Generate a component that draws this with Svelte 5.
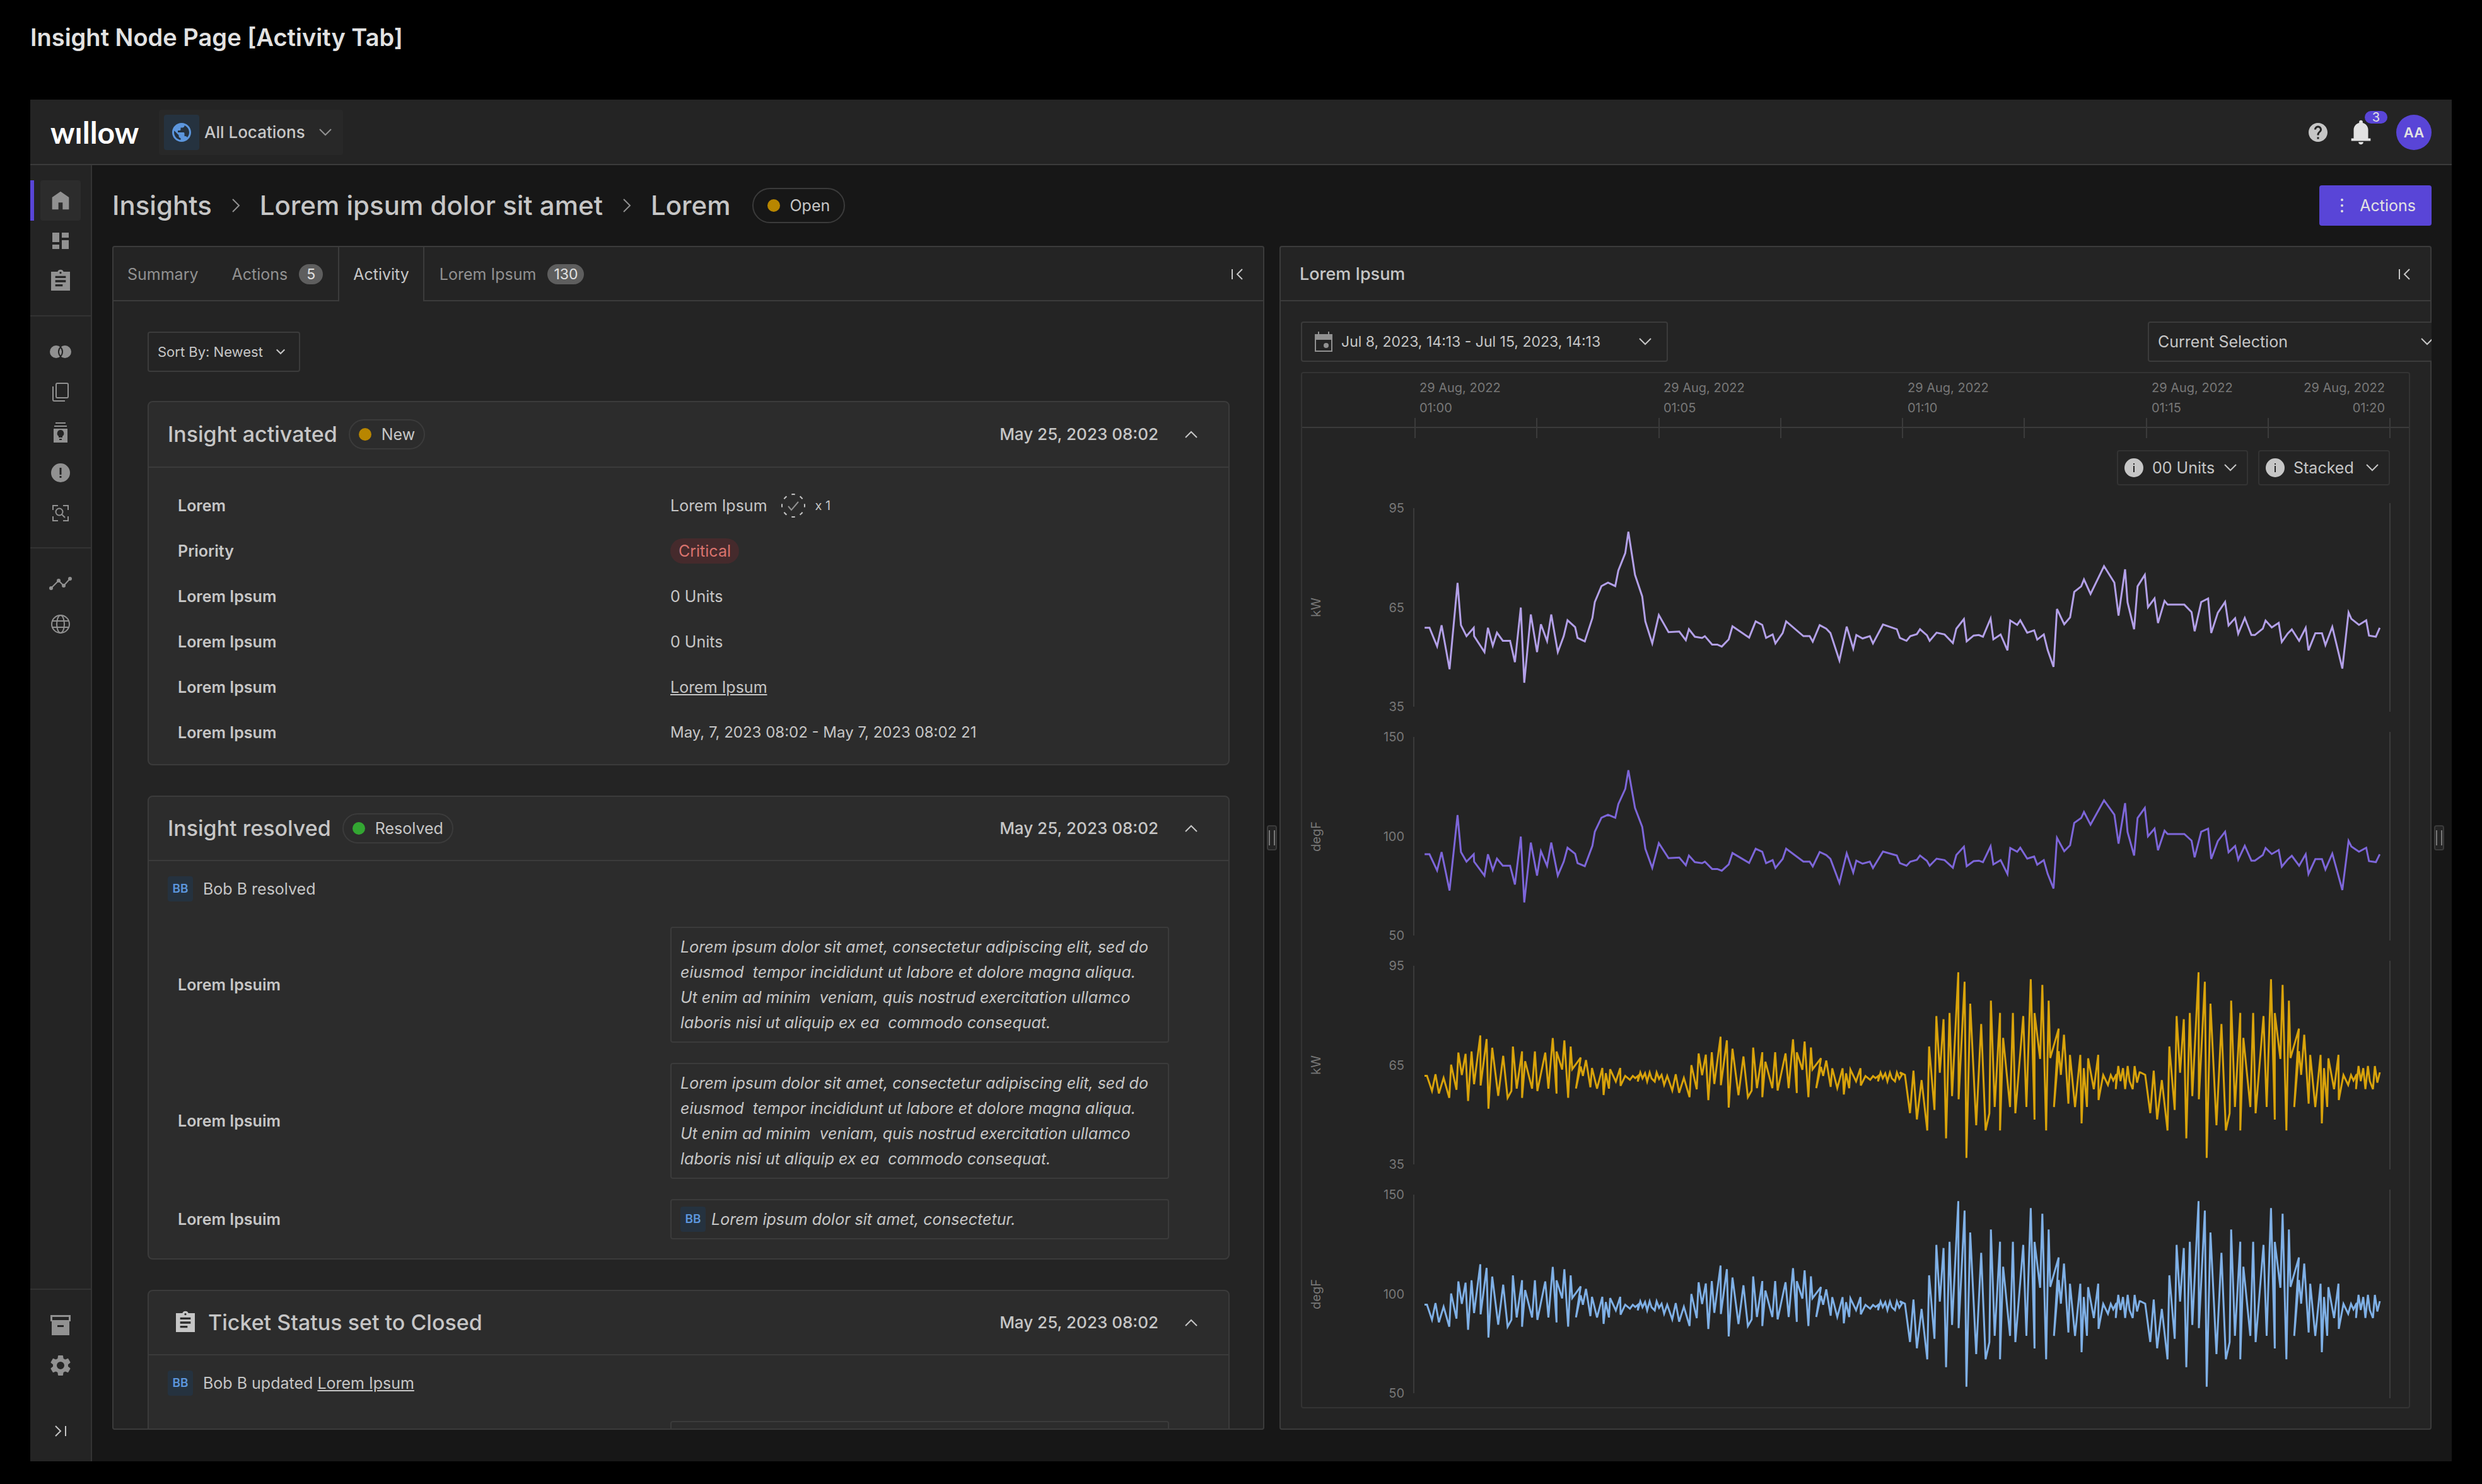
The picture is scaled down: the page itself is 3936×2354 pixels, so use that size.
<script>
  const ticks = Array.from({ length: 9 }, (_, i) => i);

  const times = [
    { day: '29 Aug, 2022', time: '01:00' },
    { day: '29 Aug, 2022', time: '01:05' },
    { day: '29 Aug, 2022', time: '01:10' },
    { day: '29 Aug, 2022', time: '01:15' }
  ];

  const load = [
    108,470,122,470,144,534,157,461,180,613,203,315,213,461,229,499,250,470,251,499,281,554,291,470,
    305,532,317,487,334,515,355,515,369,589,386,400,396,660,415,424,433,554,444,458,462,516,474,424,
    493,554,510,499,521,444,543,468,550,505,571,517,593,436,600,381,619,326,638,314,659,326,668,272,
    688,212,697,138,716,287,737,362,746,448,766,524,785,426,813,485,844,483,863,513,872,475,889,501,
    910,505,918,499,939,528,954,528,967,535,987,510,998,465,1046,504,1065,448,1084,460,1095,505,
    1114,493,1122,524,1143,488,1153,448,1203,499,1221,499,1230,518,1250,461,1269,473,1281,488,
    1307,583,1328,466,1347,542,1356,495,1374,507,1395,499,1404,524,1433,459,1473,475,1482,505,
    1501,515,1512,499,1531,492,1540,475,1560,496,1568,515,1588,487,1611,493,1635,523,1645,473,
    1667,440,1675,517,1695,497,1710,495,1722,501,1744,438,1752,510,1773,493,1793,548,1801,445,
    1821,460,1830,444,1850,487,1870,479,1879,511,1898,493,1909,547,1926,605,1936,405,1957,458,
    1974,434,1986,346,2006,327,2014,303,2033,353,2072,257,2102,314,2114,428,2133,268,2140,382,
    2159,475,2169,327,2190,287,2199,399,2218,369,2228,454,2247,377,2256,390,2304,390,2325,416,
    2334,482,2353,381,2373,369,2382,488,2401,418,2422,381,2432,462,2451,437,2460,491,2479,436,
    2498,495,2508,495,2531,473,2539,445,2557,469,2577,453,2586,519,2603,490,2615,476,2636,515,
    2655,470,2663,548,2683,489,2702,489,2712,530,2732,467,2761,611,2779,417,2787,439,2809,460,
    2830,444,2838,497,2858,501,2869,470
  ];

  const burst = [
    22,555,38,737,49,535,60,767,75,580,93,820,99,420,116,722,122,275,133,545,145,290,153,857,
    164,260,172,656,192,67,193,671,212,112,218,950,230,216,249,795,265,313,279,820,291,738,296,202,
    308,708,325,260,325,820,335,379,357,708,366,260,374,738,399,275,409,708,423,100,435,768,435,261,
    453,479,460,127,472,820,480,202,485,475,512,335,497,708,512,442,519,555,529,364,543,692,548,460,
    564,708,581,460,585,786,592,523,602,708,606,476,624,623,638,460,639,675,654,556,669,603,678,556,
    686,582,696,552,694,623,702,513,709,585,717,523,724,623,732,513,738,585,748,623,754,513,762,592,
    770,543
  ];

  function toPoints(samples, fx, fy) {
    const out = [];
    for (let i = 0; i < samples.length; i += 2) {
      out.push(fx(samples[i]).toFixed(1) + ',' + fy(samples[i + 1]).toFixed(1));
    }
    return out.join(' ');
  }

  const loadX = (x) => x / 1.823 - 41;
  const loadY = (y) => y / 2.178 - 18;
  const kwLoad = toPoints(load, loadX, loadY);
  const degLoad = toPoints(load, loadX, (y) => 60.7 + 0.8755 * (loadY(y) - 45.4));

  const cycle = [
    { start: 11, gain: 0.395, lead: [14, 555] },
    { start: 392, gain: 0.382, lead: [12, 668] },
    { start: 769, gain: 1, lead: [6, 543] },
    { start: 1150, gain: 1, lead: [6, 543] }
  ]
    .map((c) =>
      toPoints(
        [...c.lead, ...burst],
        (x) => c.start + x / 2.0103,
        (y) => (563 + c.gain * (y - 563)) / 3 - 4
      )
    )
    .join(' ');

  const plots = [
    { unit: 'kW', marks: ['95', '65', '35'], tone: 'lilac', points: kwLoad },
    { unit: 'degF', marks: ['150', '100', '50'], tone: 'violet', points: degLoad },
    { unit: 'kW', marks: ['95', '65', '35'], tone: 'amber', points: cycle },
    { unit: 'degF', marks: ['150', '100', '50'], tone: 'sky', points: cycle }
  ];

  const longNote =
    'Lorem ipsum dolor sit amet, consectetur adipiscing elit, sed do\neiusmod  tempor incididunt ut labore et dolore magna aliqua.\nUt enim ad minim  veniam, quis nostrud exercitation ullamco\nlaboris nisi ut aliquip ex ea  commodo consequat.';
</script>

{#snippet chevronDown()}
  <svg class="chev" viewBox="0 0 20 12" aria-hidden="true"><path d="M1 1l9 9 9-9" /></svg>
{/snippet}

{#snippet chevronUp()}
  <svg class="chev" viewBox="0 0 20 12" aria-hidden="true"><path d="M1 11l9-9 9 9" /></svg>
{/snippet}

{#snippet crumbArrow()}
  <svg class="crumb-arrow" viewBox="0 0 14 24" aria-hidden="true"><path d="M2 2l10 10L2 22" /></svg>
{/snippet}

{#snippet collapse()}
  <svg class="collapse" viewBox="0 0 20 18" aria-hidden="true"><path d="M2 1v16M18 1l-8 8 8 8" /></svg>
{/snippet}

{#snippet info()}
  <svg class="info" viewBox="0 0 30 30" aria-hidden="true">
    <circle cx="15" cy="15" r="15" />
    <path d="M14 8h2v2h-2zM14 12h2v10h-2z" />
  </svg>
{/snippet}

{#snippet clipboard()}
  <svg class="glyph" viewBox="0 0 24 24" aria-hidden="true">
    <path d="M21 3h-6.2a3 3 0 0 0-5.6 0H3v18h18V3zM12 3a1 1 0 1 1 0 2 1 1 0 0 1 0-2zm2 14H7v-2h7v2zm3-4H7v-2h10v2zm0-4H7V7h10v2z" />
  </svg>
{/snippet}

{#snippet cardHead(title, status, tone)}
  <header class="card-head">
    <h2>{title}</h2>
    <span class="pill small"><i class="dot {tone}"></i>{status}</span>
    <time>May 25, 2023 08:02</time>
    <button class="bare" aria-label="Collapse {title}">{@render chevronUp()}</button>
  </header>
{/snippet}

<div class="page">
  <h1>Insight Node Page [Activity Tab]</h1>

  <div class="app">
    <header class="topbar">
      <span class="logo" aria-label="willow">wıllow</span>
      <button class="site">
        <span class="site-icon">
          <svg viewBox="0 0 24 24" aria-hidden="true">
            <path d="M12 2C6.48 2 2 6.48 2 12s4.48 10 10 10 10-4.48 10-10S17.52 2 12 2zm-1 17.93c-3.95-.49-7-3.85-7-7.93 0-.62.08-1.21.21-1.79L9 15v1c0 1.1.9 2 2 2v1.93zm6.9-2.54c-.26-.81-1-1.39-1.9-1.39h-1v-3c0-.55-.45-1-1-1H8v-2h2c.55 0 1-.45 1-1V7h2c1.1 0 2-.9 2-2v-.41c2.93 1.19 5 4.06 5 7.41 0 2.08-.8 3.97-2.1 5.39z" />
          </svg>
        </span>
        <span class="site-name">All Locations</span>
        {@render chevronDown()}
      </button>
      <div class="user">
        <button class="bare help" aria-label="Help">
          <svg viewBox="0 0 24 24" aria-hidden="true">
            <path d="M12 2C6.48 2 2 6.48 2 12s4.48 10 10 10 10-4.48 10-10S17.52 2 12 2zm1 17h-2v-2h2v2zm2.07-7.75l-.9.92C13.45 12.9 13 13.5 13 15h-2v-.5c0-1.1.45-2.1 1.17-2.83l1.24-1.26c.37-.36.59-.86.59-1.41 0-1.1-.9-2-2-2s-2 .9-2 2H8c0-2.21 1.79-4 4-4s4 1.79 4 4c0 .88-.36 1.68-.93 2.25z" />
          </svg>
        </button>
        <button class="bare bell" aria-label="Notifications">
          <svg viewBox="0 0 24 24" aria-hidden="true">
            <path d="M4 17h2v-7c0-2.9 1.9-5.2 4.5-5.8v-.7a1.5 1.5 0 0 1 3 0v.7c2.6.6 4.5 2.9 4.5 5.8v7h2v2H4zM12 22a2 2 0 0 0 2-2h-4a2 2 0 0 0 2 2z" />
          </svg>
          <span class="count">3</span>
        </button>
        <button class="avatar">AA</button>
      </div>
    </header>

    <div class="shell">
      <nav class="rail" aria-label="Main">
        <div class="group">
          <a href="#home" class="item active" aria-label="Home">
            <svg class="glyph" viewBox="0 0 24 24"><path d="M4 20.5V9l8-5.5L20 9v11.5h-6V14h-4v6.500z" /></svg>
          </a>
          <a href="#dashboards" class="item" aria-label="Dashboards">
            <svg class="glyph" viewBox="-7 -7 40 40"><path d="M0 0h11v15H0zM0 19h11v7H0zM15 0h11v8H15zM15 12h11v14H15z" /></svg>
          </a>
          <a href="#tickets" class="item" aria-label="Tickets">{@render clipboard()}</a>
        </div>
        <div class="group">
          <a href="#twins" class="item" aria-label="Twins">
            <svg class="glyph" viewBox="-20 -20 40 40">
              <circle cx="-7" r="10" /><circle cx="7" r="10" />
              <path class="lens" d="M0 -7.200a10 10 0 0 1 0 14.400a10 10 0 0 1 0 -14.400z" />
            </svg>
          </a>
          <a href="#library" class="item" aria-label="Library">
            <svg class="glyph line" viewBox="-20 -20 40 40"><rect x="-7" y="-14" width="19" height="23" rx="2" /><path d="M-12-9v21q0 2 2 2H7" /></svg>
          </a>
          <a href="#insights" class="item" aria-label="Insights">
            <svg class="glyph" viewBox="-20 -20 40 40">
              <path d="M-8-16H8v2H-8zM-10-11h20v2h-20zM-11-6h22v22h-22z" />
              <path class="cut" d="M0-4a5.500 5.500 0 0 0-3 10v2h6v-2a5.500 5.500 0 0 0-3-10zM-2 10h4v2h-4z" />
            </svg>
          </a>
          <a href="#alerts" class="item" aria-label="Alerts">
            <svg class="glyph" viewBox="-20 -20 40 40"><circle r="15" /><path class="cut" d="M-1.500-8h3V3h-3zM-1.500 5h3v3h-3z" /></svg>
          </a>
          <a href="#inspect" class="item" aria-label="Inspections">
            <svg class="glyph line" viewBox="-20 -20 40 40">
              <path d="M-12-5v-7h8M4-12h8v7M12 5v7H4M-4 12h-8V5" /><circle cx="-2" cy="-2" r="5.500" /><path d="M2 2l5 5" />
            </svg>
          </a>
        </div>
        <div class="group">
          <a href="#trends" class="item" aria-label="Time series">
            <svg class="glyph line" viewBox="-20 -20 40 40">
              <path d="M-15 7L-3-5 5 3 15-8" />
              <g class="solid"><circle cx="-15" cy="7" r="3" /><circle cx="-3" cy="-5" r="3" /><circle cx="5" cy="3" r="3" /><circle cx="15" cy="-8" r="3" /></g>
            </svg>
          </a>
          <a href="#map" class="item" aria-label="Map">
            <svg class="glyph line" viewBox="-20 -20 40 40"><circle r="14" /><ellipse rx="6" ry="14" /><path d="M-13-5h26M-13 5h26" /></svg>
          </a>
        </div>
        <div class="group foot">
          <a href="#archive" class="item" aria-label="Archive">
            <svg class="glyph" viewBox="-20 -20 40 40">
              <path d="M-16-16h32v10h-32zM-14-6h28v22h-28z" /><path class="cut" d="M-13-13h26v5h-26zM-5 0H5v3H-5z" />
            </svg>
          </a>
          <a href="#settings" class="item" aria-label="Settings">
            <svg class="glyph" viewBox="0 0 24 24">
              <path d="M19.14 12.940c.04-.3.06-.61.06-.94 0-.32-.02-.64-.07-.94l2.030-1.580c.18-.14.23-.41.12-.61l-1.920-3.320c-.12-.22-.37-.29-.59-.22l-2.390.96c-.5-.38-1.030-.7-1.620-.94l-.36-2.540c-.04-.24-.24-.41-.48-.41h-3.840c-.24 0-.43.17-.47.41l-.36 2.540c-.59.24-1.130.57-1.620.94l-2.390-.96c-.22-.08-.47 0-.59.22L2.740 8.870c-.12.21-.08.47.12.61l2.030 1.580c-.05.3-.09.63-.09.94s.02.64.07.94l-2.030 1.580c-.18.14-.23.41-.12.61l1.920 3.320c.12.22.37.29.59.22l2.390-.96c.5.38 1.030.7 1.620.94l.36 2.540c.05.24.24.41.48.41h3.840c.24 0 .44-.17.47-.41l.36-2.540c.59-.24 1.130-.56 1.620-.94l2.390.96c.22.08.47 0 .59-.22l1.920-3.320c.12-.22.07-.47-.12-.61l-2.010-1.580zM12 15.600a3.600 3.600 0 1 1 0-7.200 3.600 3.600 0 0 1 0 7.200z" />
            </svg>
          </a>
        </div>
        <button class="item expand" aria-label="Expand navigation">
          <svg class="collapse" viewBox="0 0 20 18"><path d="M18 1v16M2 1l8 8-8 8" /></svg>
        </button>
      </nav>

      <main>
        <div class="heading">
          <nav class="crumbs" aria-label="Breadcrumb">
            <a href="#insights">Insights</a>
            {@render crumbArrow()}
            <a href="#insight">Lorem ipsum dolor sit amet</a>
            {@render crumbArrow()}
            <a href="#node">Lorem</a>
          </nav>
          <span class="pill"><i class="dot amber-dot"></i>Open</span>
          <button class="primary">
            <svg viewBox="0 0 4 24" aria-hidden="true"><circle cx="2" cy="3" r="2" /><circle cx="2" cy="12" r="2" /><circle cx="2" cy="21" r="2" /></svg>
            Actions
          </button>
        </div>

        <div class="panels">
          <section class="panel">
            <div class="panel-head">
              <div class="tabs" role="tablist">
                <button role="tab" aria-selected="false">Summary</button>
                <button role="tab" aria-selected="false">Actions <span class="badge">5</span></button>
                <button role="tab" aria-selected="true">Activity</button>
                <button role="tab" aria-selected="false">Lorem Ipsum <span class="badge">130</span></button>
              </div>
              <button class="bare" aria-label="Collapse panel">{@render collapse()}</button>
            </div>

            <div class="feed">
              <label class="select sort">
                <select aria-label="Sort order"><option>Sort By: Newest</option></select>
                {@render chevronDown()}
              </label>

              <article class="card">
                {@render cardHead('Insight activated', 'New', 'amber-dot')}
                <dl class="facts">
                  <div><dt>Lorem</dt><dd>Lorem Ipsum
                    <svg class="check" viewBox="-19 -19 38 38" aria-hidden="true"><circle r="18" pathLength="80" /><path d="M-8 1l5 6L8-6" /></svg>
                    <small>x 1</small></dd></div>
                  <div><dt>Priority</dt><dd><span class="critical">Critical</span></dd></div>
                  <div><dt>Lorem Ipsum</dt><dd>0 Units</dd></div>
                  <div><dt>Lorem Ipsum</dt><dd>0 Units</dd></div>
                  <div><dt>Lorem Ipsum</dt><dd><a href="#source">Lorem Ipsum</a></dd></div>
                  <div><dt>Lorem Ipsum</dt><dd class="period">May, 7, 2023 08:02 - May 7, 2023 08:02 21</dd></div>
                </dl>
              </article>

              <article class="card">
                {@render cardHead('Insight resolved', 'Resolved', 'green-dot')}
                <p class="actor"><span class="initials">BB</span>Bob B resolved</p>
                <dl class="notes">
                  <div><dt>Lorem Ipsuim</dt><dd>{longNote}</dd></div>
                  <div><dt>Lorem Ipsuim</dt><dd>{longNote}</dd></div>
                  <div><dt>Lorem Ipsuim</dt><dd class="assignee"><span class="initials">BB</span>Lorem ipsum dolor sit amet, consectetur.</dd></div>
                </dl>
              </article>

              <article class="card">
                <header class="card-head ticket">
                  {@render clipboard()}
                  <h2>Ticket Status set to Closed</h2>
                  <time>May 25, 2023 08:02</time>
                  <button class="bare" aria-label="Collapse ticket">{@render chevronUp()}</button>
                </header>
                <p class="actor"><span class="initials">BB</span><span>Bob B updated <a href="#ticket">Lorem Ipsum</a></span></p>
                <dl class="notes">
                  <div><dt></dt><dd></dd></div>
                </dl>
              </article>
            </div>
          </section>

          <div class="gutter"><i class="grip"></i></div>

          <section class="panel">
            <div class="panel-head">
              <h2 class="panel-title">Lorem Ipsum</h2>
              <button class="bare" aria-label="Collapse panel">{@render collapse()}</button>
            </div>

            <div class="viewer">
              <div class="toolbar">
                <button class="range">
                  <svg class="calendar" viewBox="0 0 28 32" aria-hidden="true">
                    <path fill-rule="evenodd" d="M0 4h5V0h2v4h14V0h2v4h5v28H0zM2 13v17h24V13z" /><circle cx="18" cy="22" r="4" />
                  </svg>
                  <span>Jul 8, 2023, 14:13 - Jul 15, 2023, 14:13</span>
                  {@render chevronDown()}
                </button>
                <label class="select selection">
                  <select aria-label="Series"><option>Current Selection</option></select>
                  {@render chevronDown()}
                </label>
              </div>

              <div class="chart">
                <div class="axis">
                  <div class="times">
                    {#each times as t}
                      <p>{t.day}<br />{t.time}</p>
                    {/each}
                    <p>29 Aug, 2022<br />01:20</p>
                  </div>
                  <div class="ticks">{#each ticks as t (t)}<i></i>{/each}</div>
                </div>

                <div class="options">
                  <label class="select">
                    {@render info()}
                    <select aria-label="Units"><option>00 Units</option></select>
                    {@render chevronDown()}
                  </label>
                  <label class="select">
                    {@render info()}
                    <select aria-label="Layout"><option>Stacked</option></select>
                    {@render chevronDown()}
                  </label>
                </div>

                <div class="plots">
                  {#each plots as plot}
                    <figure>
                      <figcaption>{plot.unit}</figcaption>
                      <div class="marks">{#each plot.marks as m}<span>{m}</span>{/each}</div>
                      <svg class="plot {plot.tone}" viewBox="0 0 1550 331" preserveAspectRatio="none" aria-hidden="true">
                        <path class="edge" d="M1 8V323M1549 0V331" />
                        <polyline points={plot.points} />
                      </svg>
                    </figure>
                  {/each}
                </div>
              </div>
            </div>
          </section>

          <div class="gutter"><i class="grip"></i></div>
        </div>
      </main>
    </div>
  </div>
</div>

<style>
  :global(*) {
    box-sizing: border-box;
  }
  :global(body) {
    margin: 0;
    background: #000;
  }
  h1, h2, p, dl, dd, figure {
    margin: 0;
  }
  button, select {
    font: inherit;
    color: inherit;
    background: none;
    border: 0;
    padding: 0;
    margin: 0;
  }
  select {
    appearance: none;
    flex: 1;
    min-width: 0;
  }
  a {
    color: inherit;
  }
  svg {
    display: block;
    flex: none;
    fill: currentColor;
  }

  .page {
    display: flex;
    flex-direction: column;
    height: 100vh;
    padding: 0 48px 36px;
    background: #000;
    color: #c6c6c6;
    font-family: Inter, sans-serif;
    font-size: 25px;
    line-height: 40px;
  }
  h1 {
    flex: none;
    height: 158px;
    padding-top: 34px;
    color: #e2e2e2;
    font-size: 38px;
    font-weight: 600;
    line-height: 50px;
  }
  .app {
    flex: 1;
    min-height: 0;
    display: flex;
    flex-direction: column;
    background: #171717;
  }

  .topbar {
    flex: none;
    display: flex;
    align-items: center;
    height: 104px;
    padding: 0 32px;
    background: #242424;
    box-shadow: inset 0 -2px #3b3b3b;
  }
  .logo {
    width: 172px;
    color: #fff;
    font-family: Lato, sans-serif;
    font-size: 48px;
    font-weight: 700;
  }
  .site {
    display: flex;
    align-items: center;
    height: 72px;
    padding: 0 18px 0 8px;
    border-radius: 4px;
    background: #282828;
    font-size: 26px;
    font-weight: 500;
  }
  .site-icon {
    display: grid;
    place-items: center;
    width: 56px;
    height: 56px;
    margin-right: 8px;
    border-radius: 4px;
    background: #25323f;
    color: #5c96dd;
  }
  .site-icon svg, .help svg {
    width: 36px;
    height: 36px;
  }
  .site-name {
    margin-right: 22px;
  }
  .site .chev {
    color: #919191;
  }
  .user {
    display: flex;
    align-items: center;
    margin-left: auto;
  }
  .bell {
    position: relative;
    margin: 0 33px 0 27px;
    color: #e2e2e2;
  }
  .bell svg {
    width: 46px;
    height: 46px;
  }
  .count {
    position: absolute;
    left: 29px;
    top: -11px;
    width: 36px;
    height: 20px;
    border-radius: 10px;
    background: #5945d7;
    font-size: 20px;
    line-height: 20px;
  }
  .avatar {
    width: 56px;
    height: 56px;
    border-radius: 50%;
    background: #5945d7;
    color: #e2e2e2;
    font-size: 22px;
    font-weight: 600;
  }

  .chev {
    width: 20px;
    height: 12px;
    fill: none;
    stroke: currentColor;
    stroke-width: 2;
  }
  .collapse {
    width: 20px;
    height: 18px;
    fill: none;
    stroke: currentColor;
    stroke-width: 2;
  }

  .shell {
    flex: 1;
    min-height: 0;
    display: flex;
  }
  .rail {
    flex: none;
    display: flex;
    flex-direction: column;
    width: 98px;
    padding-bottom: 16px;
    background: #242424;
    border-right: 2px solid #333;
    color: #919191;
  }
  .group {
    padding: 24px 0 22px;
    border-bottom: 2px solid #333;
  }
  .group:nth-of-type(3) {
    border-bottom: 0;
  }
  .foot {
    margin-top: auto;
    padding-bottom: 40px;
    border-top: 2px solid #333;
    border-bottom: 0;
  }
  .item {
    display: grid;
    place-items: center;
    width: 64px;
    height: 64px;
    margin: 0 16px;
    color: inherit;
  }
  .active {
    border-radius: 4px;
    background: #2c2c2c;
    position: relative;
  }
  .active::before {
    content: '';
    position: absolute;
    left: -16px;
    width: 6px;
    height: 64px;
    background: #5945d7;
  }
  .expand {
    color: #c6c6c6;
  }
  .glyph {
    width: 40px;
    height: 40px;
  }
  .line {
    fill: none;
    stroke: currentColor;
    stroke-width: 2;
  }
  .solid {
    fill: currentColor;
    stroke: none;
  }
  .cut {
    fill: #242424;
  }
  .lens {
    stroke: #242424;
    stroke-width: 2;
  }

  main {
    flex: 1;
    min-width: 0;
    display: flex;
    flex-direction: column;
    padding: 32px 8px 50px 32px;
  }
  .heading {
    flex: none;
    display: flex;
    align-items: center;
    height: 64px;
    margin: 0 24px 32px 0;
  }
  .crumbs {
    display: flex;
    align-items: center;
    gap: 31px;
    margin-right: 34px;
    font-size: 42px;
    font-weight: 500;
  }
  .crumbs a {
    text-decoration: none;
  }
  .crumb-arrow {
    width: 14px;
    height: 24px;
    fill: none;
    stroke: #919191;
    stroke-width: 2;
  }
  .pill {
    display: flex;
    align-items: center;
    gap: 16px;
    height: 56px;
    padding: 0 22px;
    border: 2px solid #3b3b3b;
    border-radius: 28px;
  }
  .small {
    height: 48px;
    padding: 0 14px;
    border-radius: 24px;
  }
  .dot {
    width: 20px;
    height: 20px;
    border-radius: 50%;
  }
  .amber-dot {
    background: #b88600;
  }
  .green-dot {
    background: #33a632;
  }
  .primary {
    display: flex;
    align-items: center;
    gap: 26px;
    height: 64px;
    margin-left: auto;
    padding: 0 25px 0 34px;
    border-radius: 4px;
    background: #5945d7;
    color: #e2e2e2;
  }
  .primary svg {
    width: 4px;
    height: 24px;
  }

  .panels {
    flex: 1;
    min-height: 0;
    display: grid;
    grid-template-columns: 1fr 24px 1fr 24px;
    grid-template-rows: minmax(0, 1fr);
  }
  .panel {
    display: flex;
    flex-direction: column;
    min-width: 0;
    padding: 2px;
    overflow: hidden;
    border-radius: 4px;
    background: #242424;
    box-shadow: inset 0 0 0 2px #3b3b3b;
  }
  .panel-head {
    flex: none;
    display: flex;
    align-items: center;
    justify-content: space-between;
    height: 86px;
    padding-right: 31px;
    box-shadow: inset 0 -2px #3b3b3b;
  }
  .panel-title {
    padding-left: 30px;
    font-size: 27px;
    font-weight: 500;
  }
  .tabs {
    display: flex;
    height: 86px;
  }
  .tabs button {
    display: flex;
    align-items: center;
    gap: 18px;
    padding: 0 24px;
    color: #919191;
  }
  .tabs button:first-child {
    padding: 0 29px 0 22px;
  }
  .tabs [aria-selected='true'] {
    padding: 0 22px;
    border: solid #3b3b3b;
    border-width: 0 2px;
    background: #242424;
    color: #c6c6c6;
  }
  .badge {
    min-width: 38px;
    height: 32px;
    padding: 0 10px;
    border-radius: 16px;
    background: #5e5e5e;
    color: #e2e2e2;
    font-size: 23px;
    line-height: 32px;
  }

  .gutter {
    display: grid;
    place-items: center;
  }
  .grip {
    display: flex;
    justify-content: center;
    width: 16px;
    height: 40px;
    padding: 6px 0;
    border: 2px solid #3b3b3b;
    border-radius: 4px;
    background: #242424;
  }
  .grip::before {
    content: '';
    width: 6px;
    border: solid #777;
    border-width: 0 2px;
  }

  .select, .range {
    display: flex;
    align-items: center;
    border: 2px solid #3b3b3b;
    border-radius: 4px;
    height: 64px;
  }
  .feed {
    flex: 1;
    min-height: 0;
    padding: 48px 53px 0 54px;
    overflow: hidden;
  }
  .sort {
    width: 242px;
    margin-bottom: 46px;
    padding: 0 22px 0 14px;
    font-size: 22px;
  }
  .sort .chev {
    width: 14px;
    height: 10px;
    stroke-width: 3;
  }
  .card {
    margin-bottom: 48px;
    border: 2px solid #3b3b3b;
    border-radius: 8px;
    background: #2c2c2c;
  }
  .card-head {
    display: flex;
    align-items: center;
    height: 102px;
    padding: 0 49px 0 30px;
    border-bottom: 2px solid #3b3b3b;
  }
  .card:first-of-type .card-head {
    height: 104px;
  }
  .card-head h2 {
    margin-right: 18px;
    font-size: 34px;
    font-weight: 500;
  }
  .card-head time {
    margin: 0 42px 0 auto;
    font-size: 26px;
    font-weight: 500;
  }
  .ticket {
    padding-left: 38px;
  }
  .card-head.ticket h2 {
    margin-left: 16px;
  }
  .facts {
    padding: 24px 0 14px;
  }
  .facts > div, .notes > div {
    display: grid;
    grid-template-columns: 781px 1fr;
    align-items: center;
    padding-left: 46px;
  }
  .facts > div {
    height: 72px;
  }
  dt {
    font-weight: 600;
  }
  .facts dd {
    display: flex;
    align-items: center;
  }
  .facts .period {
    font-size: 24px;
  }
  .check {
    width: 38px;
    height: 38px;
    margin: 0 16px 0 22px;
    fill: none;
    stroke: currentColor;
    stroke-width: 2;
  }
  .check circle {
    stroke-dasharray: 4 6;
    stroke-dashoffset: 2;
  }
  .check path {
    stroke: #919191;
  }
  small {
    font-size: 20px;
  }
  .critical {
    height: 40px;
    padding: 0 13px;
    border-radius: 20px;
    background: #452a2c;
    color: #d9736e;
  }
  .actor {
    display: flex;
    align-items: center;
    gap: 16px;
    padding: 24px 0 40px 30px;
  }
  .initials {
    width: 40px;
    height: 40px;
    border-radius: 4px;
    background: #25323f;
    color: #5c96dd;
    font-size: 19px;
    font-style: normal;
    font-weight: 600;
    text-align: center;
  }
  .notes {
    display: grid;
    gap: 32px;
    padding-bottom: 30px;
  }
  .notes > div {
    padding-right: 94px;
  }
  .notes dd {
    padding: 10px 0 10px 14px;
    border: 2px solid #3b3b3b;
    border-radius: 4px;
    font-style: italic;
    white-space: pre;
  }
  .notes .assignee {
    display: flex;
    gap: 9px;
  }

  .viewer {
    flex: 1;
    min-height: 0;
    display: flex;
    flex-direction: column;
    gap: 16px;
    padding: 32px;
  }
  .toolbar {
    flex: none;
    display: flex;
    justify-content: space-between;
  }
  .range {
    width: 582px;
    padding: 0 24px 0 20px;
    font-size: 23px;
  }
  .range span {
    margin: 0 auto 0 14px;
  }
  .calendar {
    width: 28px;
    height: 32px;
    color: #919191;
  }
  .selection {
    width: 482px;
    margin-right: -66px;
    padding: 0 27px 0 14px;
    background: #242424;
  }
  .chart {
    flex: 1;
    min-height: 0;
    display: flex;
    flex-direction: column;
    border: 2px solid #333;
    border-radius: 4px;
  }
  .axis {
    flex: none;
    height: 87px;
    padding: 7px 29px 0 178px;
    border-bottom: 2px solid #3b3b3b;
    color: #777;
    font-size: 20px;
    line-height: 32px;
  }
  .times {
    display: grid;
    grid-template-columns: repeat(4, minmax(0, 1fr));
  }
  .times p {
    grid-row: 1;
    padding-left: 8px;
  }
  .times p:nth-child(1) {
    grid-column: 1;
  }
  .times p:nth-child(2) {
    grid-column: 2;
  }
  .times p:nth-child(3) {
    grid-column: 3;
  }
  .times p:nth-child(4) {
    grid-column: 4;
  }
  .times p:last-child {
    grid-column: 4;
    justify-self: end;
    padding-right: 9px;
    text-align: right;
  }
  .ticks {
    display: flex;
    justify-content: space-between;
    height: 32px;
  }
  .ticks i {
    width: 2px;
    background: #3b3b3b;
  }
  .options {
    flex: none;
    display: flex;
    justify-content: flex-end;
    gap: 16px;
    padding: 35px 30px 28px;
  }
  .options .select {
    height: 56px;
    gap: 14px;
    padding: 0 16px 0 10px;
    border-color: #333;
  }
  .options .select:last-child select {
    margin-right: 5px;
  }
  .info {
    width: 30px;
    height: 30px;
  }
  .info path {
    fill: #242424;
  }
  .plots {
    flex: 1;
    min-height: 0;
    display: flex;
    flex-direction: column;
    gap: 32px;
    padding: 0 29px 14px 0;
  }
  figure {
    flex: 1;
    min-height: 0;
    display: grid;
    grid-template-columns: 44px 118px 1fr;
    color: #777;
    font-size: 20px;
    line-height: 16px;
  }
  figcaption {
    place-self: center;
    writing-mode: vertical-rl;
    transform: rotate(180deg);
  }
  .marks {
    display: flex;
    flex-direction: column;
    justify-content: space-between;
    text-align: right;
  }
  .plot {
    width: 100%;
    height: 100%;
    padding-left: 14px;
    fill: none;
    stroke: currentColor;
    stroke-width: 3;
    overflow: visible;
  }
  .edge {
    stroke: #3b3b3b;
    stroke-width: 2;
  }
  .edge, polyline {
    vector-effect: non-scaling-stroke;
  }
  .lilac {
    color: #b3a0e8;
  }
  .violet {
    color: #7d66d9;
  }
  .amber {
    color: #d9a30b;
  }
  .sky {
    color: #7fb0e6;
  }
</style>
